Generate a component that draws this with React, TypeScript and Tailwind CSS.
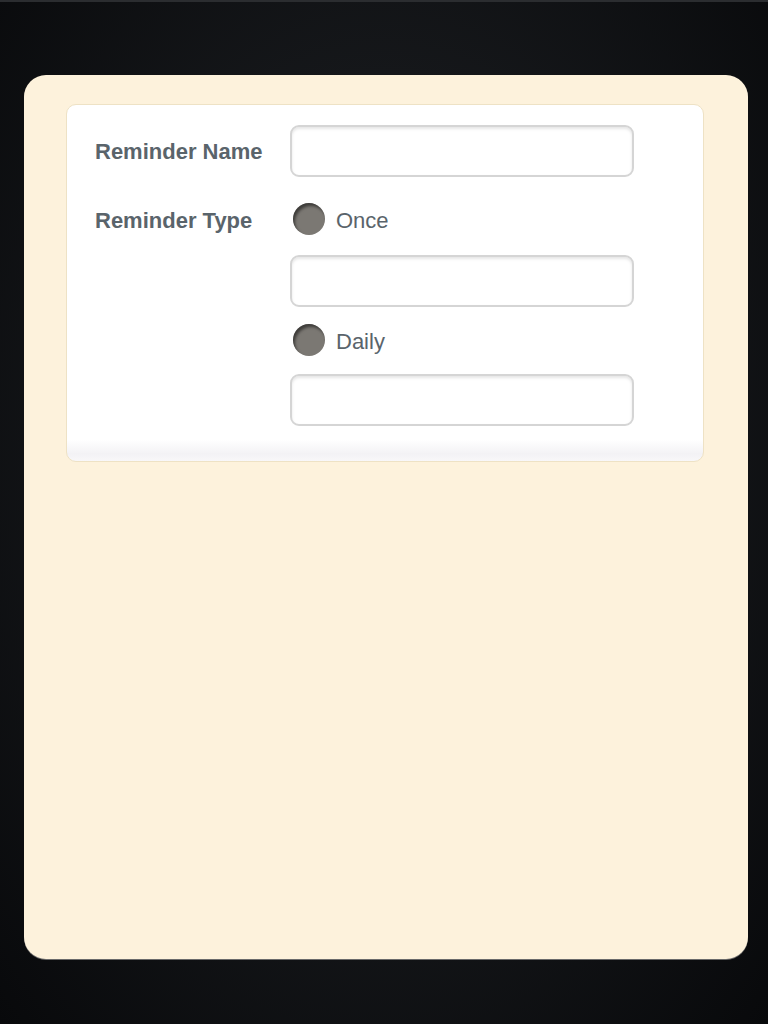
import React from "react";

function Field() {
  return (
    <div className="w-[344px] h-[52px] rounded-[9px] border-2 border-[#d5d5d5] bg-white shadow-[inset_0_2px_3px_rgba(0,0,0,0.10)]" />
  );
}

function Radio({ label }: { label: string }) {
  return (
    <div className="flex items-center h-[32px] pl-[3px]">
      <div className="w-[32px] h-[32px] rounded-full bg-[#7b7873] shadow-[inset_2px_3px_3px_rgba(0,0,0,0.5)]" />
      <span className="ml-[11px] mt-[3px] text-[22px] leading-none text-[#5a646b]">{label}</span>
    </div>
  );
}

export default function App() {
  return (
    <div
      className="w-[768px] h-[1024px] overflow-hidden bg-[radial-gradient(ellipse_at_50%_45%,#1d2024_0%,#16181b_45%,#08090b_100%)] border-t-2 border-[#2b2d30]"
      style={{ fontFamily: '"Liberation Sans", Arial, sans-serif' }}
    >
      <div className="pt-[73px] px-[24px]">
        <div className="w-[724px] h-[884px] rounded-[22px] bg-[#fdf2dc] shadow-[0_1px_0_#6a6a6a] pt-[29px] pl-[42px]">
          <div className="w-[638px] rounded-[10px] border border-[#eee2c5] bg-[linear-gradient(to_bottom,#ffffff_0%,#ffffff_94%,#f3f2f5_98%,#f8f7f9_100%)] pt-[20px] pb-[35px] pl-[28px]">
            <div className="flex items-center">
              <div className="w-[195px] text-[22px] font-bold text-[#5a646b]">Reminder Name</div>
              <Field />
            </div>
            <div className="flex mt-[26px]">
              <div className="w-[195px] h-[32px] flex items-center">
                <span className="mt-[3px] text-[22px] leading-none font-bold text-[#5a646b]">Reminder Type</span>
              </div>
              <div className="flex flex-col">
                <Radio label="Once" />
                <div className="mt-[20px]"><Field /></div>
                <div className="mt-[17px]"><Radio label="Daily" /></div>
                <div className="mt-[18px]"><Field /></div>
              </div>
            </div>
          </div>
        </div>
      </div>
    </div>
  );
}
